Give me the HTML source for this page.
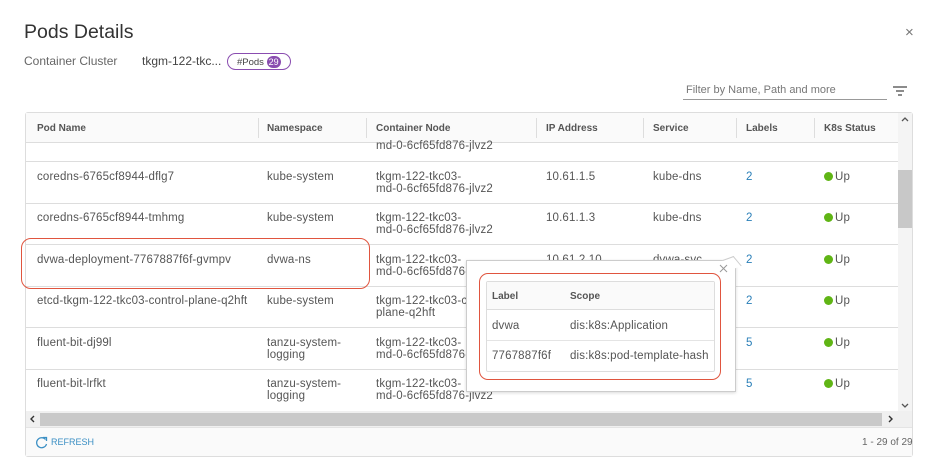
<!DOCTYPE html>
<html><head><meta charset="utf-8"><style>
*{box-sizing:border-box;margin:0;padding:0}
body{width:936px;height:467px;background:#fff;font-family:"Liberation Sans",sans-serif;color:#565656;position:relative;overflow:hidden}
.a{position:absolute;white-space:nowrap}
.t{font-size:11.5px;line-height:12px;color:#555;letter-spacing:.15px}
.h{font-size:10px;font-weight:bold;color:#555}
.hl{position:absolute;top:118px;width:1px;height:20px;background:#ddd}
.rl{position:absolute;left:26px;width:872px;height:1px;background:#ddd}
.lk{color:#2a7fb8}
.dot{display:inline-block;width:9px;height:9px;border-radius:50%;background:#60b515;vertical-align:-1px;margin-right:2px}
</style></head><body>
<div class="a" style="left:24px;top:21px;font-size:19.5px;color:#333">Pods Details</div>
<div class="a" style="left:905px;top:24px;font-size:15px;color:#777">×</div>
<div class="a" style="left:24px;top:54px;font-size:12px;color:#666">Container Cluster</div>
<div class="a" style="left:142px;top:54px;font-size:12px;color:#444">tkgm-122-tkc...</div>
<div class="a" style="left:227px;top:53px;width:64px;height:17px;border:1px solid #8a4db0;border-radius:9px;font-size:9.5px;color:#444;padding:2px 0 0 9px">#Pods <span style="display:inline-block;background:#8a4db0;color:#fff;border-radius:7px;padding:0 2px;font-size:9px;line-height:12px">29</span></div>
<div class="a" style="left:686px;top:84px;font-size:11px;color:#777">Filter by Name, Path and more</div>
<div class="a" style="left:683px;top:99px;width:204px;height:1px;background:#999"></div>
<svg class="a" style="left:892px;top:85px" width="16" height="12"><path d="M1 2h14M4 6h8M6 10h4" stroke="#666" stroke-width="1.5"/></svg>

<div class="a" style="left:25px;top:112px;width:888px;height:345px;border:1px solid #ddd;border-radius:3px"></div>
<div class="a" style="left:26px;top:113px;width:872px;height:30px;background:#fafafa;border-bottom:1px solid #ddd"></div>
<div class="a h" style="left:37px;top:123px">Pod Name</div>
<div class="a h" style="left:267px;top:123px">Namespace</div>
<div class="a h" style="left:376px;top:123px">Container Node</div>
<div class="a h" style="left:546px;top:123px">IP Address</div>
<div class="a h" style="left:653px;top:123px">Service</div>
<div class="a h" style="left:746px;top:123px">Labels</div>
<div class="a h" style="left:824px;top:123px">K8s Status</div>
<div class="hl" style="left:258px"></div><div class="hl" style="left:366px"></div><div class="hl" style="left:536px"></div><div class="hl" style="left:643px"></div><div class="hl" style="left:736px"></div><div class="hl" style="left:814px"></div>
<div class="a" style="left:898px;top:113px;width:14px;height:300px;background:#f4f4f4"></div>
<div class="a" style="left:898px;top:170px;width:14px;height:58px;background:#c8c8c8"></div>
<svg class="a" style="left:901px;top:116px" width="8" height="6"><path d="M1 5l3-3 3 3" fill="none" stroke="#555" stroke-width="1.3"/></svg>
<svg class="a" style="left:901px;top:403px" width="8" height="6"><path d="M1 1l3 3 3-3" fill="none" stroke="#555" stroke-width="1.3"/></svg>

<div class="a t" style="left:376px;top:140px">md-0-6cf65fd876-jlvz2</div>
<div class="rl" style="top:161px"></div>
<div class="a t" style="left:37px;top:171px">coredns-6765cf8944-dflg7</div><div class="a t" style="left:267px;top:171px">kube-system</div><div class="a t" style="left:376px;top:171px">tkgm-122-tkc03-<br>md-0-6cf65fd876-jlvz2</div><div class="a t" style="left:546px;top:171px">10.61.1.5</div><div class="a t" style="left:653px;top:171px">kube-dns</div><div class="a t lk" style="left:746px;top:171px">2</div><div class="a t" style="left:824px;top:171px"><span class="dot"></span>Up</div>
<div class="rl" style="top:203px"></div>
<div class="a t" style="left:37px;top:212px">coredns-6765cf8944-tmhmg</div><div class="a t" style="left:267px;top:212px">kube-system</div><div class="a t" style="left:376px;top:212px">tkgm-122-tkc03-<br>md-0-6cf65fd876-jlvz2</div><div class="a t" style="left:546px;top:212px">10.61.1.3</div><div class="a t" style="left:653px;top:212px">kube-dns</div><div class="a t lk" style="left:746px;top:212px">2</div><div class="a t" style="left:824px;top:212px"><span class="dot"></span>Up</div>
<div class="rl" style="top:244px"></div>
<div class="a t" style="left:37px;top:254px">dvwa-deployment-7767887f6f-gvmpv</div><div class="a t" style="left:267px;top:254px">dvwa-ns</div><div class="a t" style="left:376px;top:254px">tkgm-122-tkc03-<br>md-0-6cf65fd876-jlvz2</div><div class="a t" style="left:546px;top:254px">10.61.2.10</div><div class="a t" style="left:653px;top:254px">dvwa-svc</div><div class="a t lk" style="left:746px;top:254px">2</div><div class="a t" style="left:824px;top:254px"><span class="dot"></span>Up</div>
<div class="rl" style="top:286px"></div>
<div class="a t" style="left:37px;top:295px">etcd-tkgm-122-tkc03-control-plane-q2hft</div><div class="a t" style="left:267px;top:295px">kube-system</div><div class="a t" style="left:376px;top:295px">tkgm-122-tkc03-control-<br>plane-q2hft</div><div class="a t lk" style="left:746px;top:295px">2</div><div class="a t" style="left:824px;top:295px"><span class="dot"></span>Up</div>
<div class="rl" style="top:327px"></div>
<div class="a t" style="left:37px;top:337px">fluent-bit-dj99l</div><div class="a t" style="left:267px;top:337px">tanzu-system-<br>logging</div><div class="a t" style="left:376px;top:337px">tkgm-122-tkc03-<br>md-0-6cf65fd876-jlvz2</div><div class="a t lk" style="left:746px;top:337px">5</div><div class="a t" style="left:824px;top:337px"><span class="dot"></span>Up</div>
<div class="rl" style="top:369px"></div>
<div class="a t" style="left:37px;top:378px">fluent-bit-lrfkt</div><div class="a t" style="left:267px;top:378px">tanzu-system-<br>logging</div><div class="a t" style="left:376px;top:378px">tkgm-122-tkc03-<br>md-0-6cf65fd876-jlvz2</div><div class="a t lk" style="left:746px;top:378px">5</div><div class="a t" style="left:824px;top:378px"><span class="dot"></span>Up</div>

<div class="a" style="left:26px;top:411px;width:886px;height:16px;background:#f0f0f0"></div>
<div class="a" style="left:40px;top:413px;width:842px;height:13px;background:#c9c9c9"></div>
<svg class="a" style="left:29px;top:415px" width="6" height="8"><path d="M5 1L2 4l3 3" fill="none" stroke="#333" stroke-width="1.4"/></svg>
<svg class="a" style="left:888px;top:415px" width="6" height="8"><path d="M1 1l3 3-3 3" fill="none" stroke="#333" stroke-width="1.4"/></svg>
<div class="a" style="left:26px;top:427px;width:886px;height:29px;background:#fafafa;border-top:1px solid #e4e4e4"></div>
<svg class="a" style="left:35px;top:436px" width="13" height="13"><path d="M10.5 3.5A5 5 0 1 0 11.5 8" fill="none" stroke="#3b8fc4" stroke-width="1.3"/><path d="M8 1.5h3.5V5" fill="none" stroke="#3b8fc4" stroke-width="1.3"/></svg>
<div class="a" style="left:51px;top:437px;font-size:9px;color:#3b8fc4">REFRESH</div>
<div class="a" style="left:862px;top:437px;font-size:10px;color:#666">1 - 29 of 29</div>

<div class="a" style="left:21px;top:238px;width:349px;height:51px;border:1.5px solid #e0553f;border-radius:10px"></div>

<div class="a" style="left:466px;top:260px;width:270px;height:132px;background:#fff;border:1px solid #ccc;box-shadow:0 1px 3px rgba(0,0,0,.15)"></div>
<div class="a" style="left:726px;top:257px;width:12px;height:12px;background:#fff;border-top:1px solid #ccc;border-right:1px solid #ccc;transform:rotate(-20deg) skewX(20deg)"></div>
<svg class="a" style="left:719px;top:264px" width="9" height="9"><path d="M1 1l7 7M8 1l-7 7" stroke="#999" stroke-width="1"/></svg>
<div class="a" style="left:479px;top:273px;width:242px;height:107px;border:1.5px solid #e0553f;border-radius:9px"></div>
<div class="a" style="left:486px;top:281px;width:229px;height:91px;border:1px solid #ddd;border-radius:2px"></div>
<div class="a" style="left:487px;top:282px;width:227px;height:28px;background:#fafafa;border-bottom:1px solid #ddd"></div>
<div class="a h" style="left:492px;top:291px">Label</div>
<div class="a h" style="left:570px;top:291px">Scope</div>
<div class="a t" style="left:492px;top:320px">dvwa</div>
<div class="a t" style="left:570px;top:320px">dis:k8s:Application</div>
<div class="a" style="left:487px;top:340px;width:227px;height:1px;background:#e4e4e4"></div>
<div class="a t" style="left:492px;top:350px">7767887f6f</div>
<div class="a t" style="left:570px;top:350px">dis:k8s:pod-template-hash</div>
</body></html>
